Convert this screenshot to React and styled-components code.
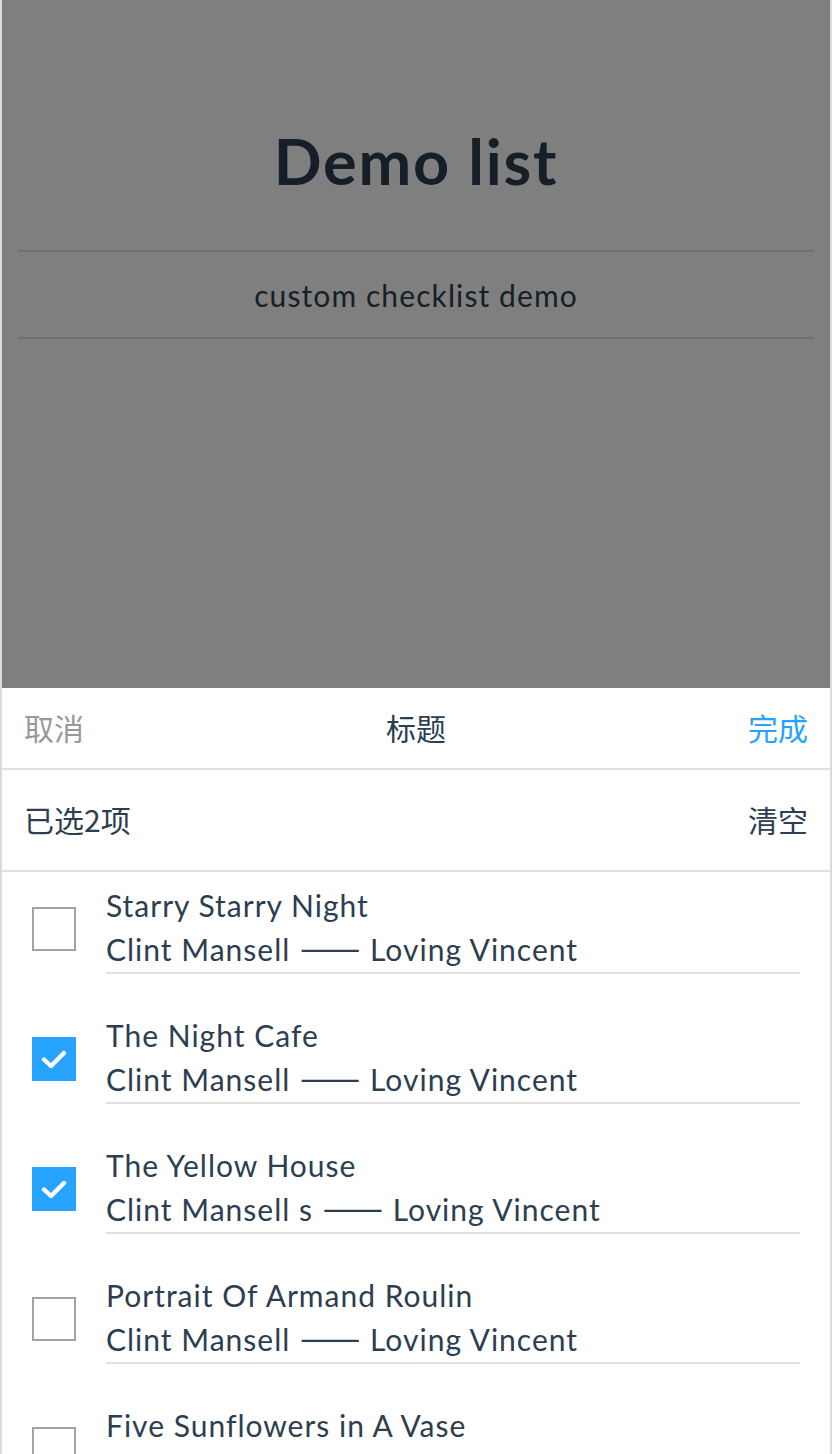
import React, { useState } from 'react'
import styled, { createGlobalStyle } from 'styled-components'

const GlobalStyle = createGlobalStyle`
  html, body {
    margin: 0;
    padding: 0;
    background: #fff;
  }
  * { box-sizing: border-box; }
`

const Frame = styled.div`
  position: relative;
  width: 832px;
  height: 1454px;
  overflow: hidden;
  border-left: 2px solid #dcdcdc;
  border-right: 2px solid #dcdcdc;
  background: #fff;
  font-family: Lato, "Noto Sans CJK SC", sans-serif;
  color: #2c3e50;
`

const Page = styled.div`
  padding: 0 16px;
`

const Title = styled.h1`
  margin: 0;
  padding: 124px 0 52px;
  text-align: center;
  font-size: 63px;
  line-height: 74px;
  font-weight: 700;
  letter-spacing: 1.8px;
  border-bottom: 2px solid #e0e0e0;
`

const Subtitle = styled.p`
  margin: 0;
  height: 87px;
  display: flex;
  align-items: center;
  justify-content: center;
  font-size: 30px;
  font-weight: 400;
  letter-spacing: 1.1px;
  border-bottom: 2px solid #e0e0e0;
`

const Mask = styled.div`
  position: absolute;
  inset: 0;
  background: rgba(0, 0, 0, 0.5);
`

const Sheet = styled.div`
  position: absolute;
  left: 0;
  right: 0;
  top: 688px;
  bottom: 0;
  background: #fff;
  font-family: "Noto Sans CJK SC", Lato, sans-serif;
`

const Bar = styled.div`
  display: flex;
  align-items: center;
  justify-content: space-between;
  height: ${props => props.tall ? '102px' : '82px'};
  padding: 0 22px 2px;
  border-bottom: 2px solid #e0e0e0;
  font-size: 30px;
`

const BarBtn = styled.span`
  color: ${props => props.color || '#2c3e50'};
`

const List = styled.div``

const Item = styled.div`
  display: flex;
  align-items: center;
  padding: 12px 0 28px 30px;
`

const Box = styled.span`
  flex: none;
  width: 44px;
  height: 44px;
  margin-right: 30px;
  display: flex;
  align-items: center;
  justify-content: center;
  border: ${props => props.checked ? 'none' : '2px solid #a3a3a3'};
  background: ${props => props.checked ? '#26a2ff' : '#fff'};
`

const Text = styled.div`
  width: 694px;
  border-bottom: 2px solid #e0e0e0;
  font-family: Lato, sans-serif;
  font-size: 30px;
  line-height: 44px;
  letter-spacing: 1px;
  color: #2c3e50;
`

const Line = styled.div`
  height: 44px;
  white-space: nowrap;
  position: relative;
  top: -1px;
`

const Dash = styled.span`
  font-family: "Noto Sans CJK SC", sans-serif;
  font-size: 36px;
  line-height: 1;
  letter-spacing: 0;
  margin: 0 1px;
`

const Check = () => (
  <svg width="26" height="20" viewBox="0 0 26 20">
    <path d="M3 10.5 L10 17 L23 4" fill="none" stroke="#fff" strokeWidth="4.4" strokeLinecap="round" strokeLinejoin="round" />
  </svg>
)

const songs = [
  { id: 1, title: 'Starry Starry Night', artist: 'Clint Mansell' },
  { id: 2, title: 'The Night Cafe', artist: 'Clint Mansell' },
  { id: 3, title: 'The Yellow House', artist: 'Clint Mansell s' },
  { id: 4, title: 'Portrait Of Armand Roulin', artist: 'Clint Mansell' },
  { id: 5, title: 'Five Sunflowers in A Vase', artist: 'Clint Mansell' },
]

const App = () => {
  const [selected, setSelected] = useState([2, 3])

  const toggle = (id) => {
    setSelected(selected.includes(id) ? selected.filter(s => s !== id) : [...selected, id])
  }

  return (
    <Frame>
      <GlobalStyle />
      <Page>
        <Title>Demo list</Title>
        <Subtitle>custom checklist demo</Subtitle>
      </Page>
      <Mask />
      <Sheet>
        <Bar>
          <BarBtn color="#999">取消</BarBtn>
          <BarBtn>标题</BarBtn>
          <BarBtn color="#26a2ff">完成</BarBtn>
        </Bar>
        <Bar tall>
          <BarBtn>已选{selected.length}项</BarBtn>
          <BarBtn onClick={() => setSelected([])}>清空</BarBtn>
        </Bar>
        <List>
          {songs.map(song => (
            <Item key={song.id} onClick={() => toggle(song.id)}>
              <Box checked={selected.includes(song.id)}>
                {selected.includes(song.id) && <Check />}
              </Box>
              <Text>
                <Line>{song.title}</Line>
                <Line>{song.artist} <Dash>——</Dash> Loving Vincent</Line>
              </Text>
            </Item>
          ))}
        </List>
      </Sheet>
    </Frame>
  )
}

export default App
